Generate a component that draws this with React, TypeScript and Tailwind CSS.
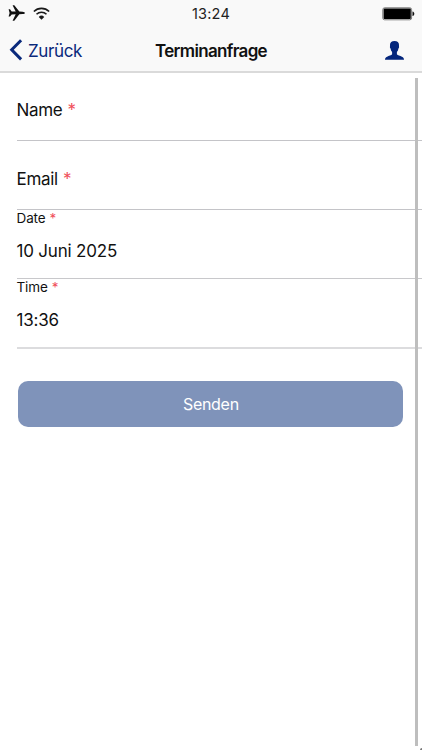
import React from "react";

function StatusBar() {
  return (
    <div className="grid h-7 grid-cols-3 items-center">
      <div className="flex items-center gap-2 pl-2">
        <svg width="17" height="16" viewBox="0 0 17 16" fill="#111" className="-mt-0.5">
          <path d="M.6 4.300h1.400l1.700 2.200 4 .1L4.600.2h1.700l5 6.400 3.300.2c1.400.1 2.300.6 2.300 1.200s-.9 1-2.300 1.100l-3.300.2-5 6.400H4.600l3.100-6.400-4 .1L2 11.600H.6L1.600 8z" />
        </svg>
        <svg width="17" height="13" viewBox="0 0 16 12" fill="none" stroke="#1a1a1a" strokeWidth="1.5" className="-mt-0.5">
          <path d="M.8 4.100a10.300 10.300 0 0 1 14.400 0" />
          <path d="M3.300 6.700a6.700 6.700 0 0 1 9.400 0" />
          <path d="M8 11.800 5.400 9.200a3.800 3.800 0 0 1 5.200 0z" fill="#1a1a1a" stroke="none" />
        </svg>
      </div>
      <span className="text-center text-[14.5px] leading-7 tracking-[0.2px] text-[#222]">13:24</span>
      <div className="flex justify-end pr-[7px]">
        <svg width="33" height="14" viewBox="0 0 33 14" className="-mt-px">
          <rect x=".8" y=".8" width="28.8" height="12" rx="1.8" fill="#fff" stroke="#777" strokeWidth="1" />
          <rect x="1.6" y="1.6" width="27.2" height="10.4" rx=".8" fill="#000" />
          <path d="M30.5 4.500c1.300.4 1.800 1.200 1.800 2.300s-.5 1.900-1.800 2.300z" fill="#111" />
        </svg>
      </div>
    </div>
  );
}

function NavBar() {
  return (
    <div className="grid h-11 grid-cols-3 items-center">
      <div className="flex items-center gap-[5px] pl-[9px] text-[#0a2a7c]">
        <svg width="14" height="22" viewBox="0 0 14 22" fill="none" stroke="currentColor" strokeWidth="3">
          <path d="M12.100 1.200 2.700 10.800l9.400 9.600" />
        </svg>
        <span className="pt-px text-[17px] leading-[22px] tracking-[-0.38px]">Zurück</span>
      </div>
      <h1 className="pt-px text-center text-[17px] leading-[22px] font-semibold tracking-[-0.68px] whitespace-nowrap text-[#111]">
        Terminanfrage
      </h1>
      <div className="flex justify-end pr-[18px]">
        <svg width="19" height="19" viewBox="0 0 19 19" fill="#04267c">
          <path d="M9.500 0C6.600 0 5 1.300 5 3.900c0 .8.100 1.200 0 1.600-.3.700.1 1.600.6 2.100.3 1.800.8 2.700 1.500 3.500v2.200c-.5 1-3.400 1.600-5 2.500C.6 16.500 0 17.300 0 18.800h19c0-1.500-.6-2.300-2.100-3-1.600-.9-4.500-1.500-5-2.500v-2.200c.7-.8 1.200-1.700 1.500-3.500.5-.5.9-1.400.6-2.100-.1-.4 0-.8 0-1.600C14 1.300 12.400 0 9.500 0z" />
        </svg>
      </div>
    </div>
  );
}

function EmptyField({ label }: { label: string }) {
  return (
    <div className="flex h-[69px] items-center border-b border-[#c4c4c8] pt-[7px] text-[17px] leading-6 tracking-[-0.3px]">
      {label}
      <span className="ml-[5px] text-[#f0505a]">*</span>
    </div>
  );
}

function FilledField({ label, value }: { label: string; value: string }) {
  return (
    <div className="h-[69px] border-b border-[#c8c8cb] last:h-[70px] last:border-b-2 last:border-[#dcdcde]">
      <div className="flex h-[17px] items-center text-[13.5px] leading-[17px] tracking-[-0.1px]">
        {label}
        <span className="ml-1 text-[#f0505a]">*</span>
      </div>
      <div className="pt-3 text-[17px] leading-6 tracking-[-0.2px]">{value}</div>
    </div>
  );
}

export default function App() {
  return (
    <div className="relative h-[750px] w-full overflow-hidden bg-white font-['Inter','Liberation_Sans',sans-serif] text-[#111]">
      <header className="h-[73px] border-b-2 border-[#dadada] bg-[#f9f9f9]">
        <StatusBar />
        <NavBar />
      </header>
      <main className="-mt-px">
        <div className="pl-[16.500px]">
          <EmptyField label="Name" />
          <EmptyField label="Email" />
          <FilledField label="Date" value="10 Juni 2025" />
          <FilledField label="Time" value="13:36" />
        </div>
        <button className="mt-8 ml-[18.400px] flex h-[46px] w-[385px] items-center justify-center rounded-[10px] bg-[#7f93ba] text-[16px] tracking-[-0.3px] text-white">
          Senden
        </button>
      </main>
      <div className="absolute top-[78px] left-[415px] h-[668px] w-[3px] bg-[#bebebe]" />
      <div className="absolute right-0 bottom-0 size-0.5 rounded-tl-full bg-[#777]" />
    </div>
  );
}
